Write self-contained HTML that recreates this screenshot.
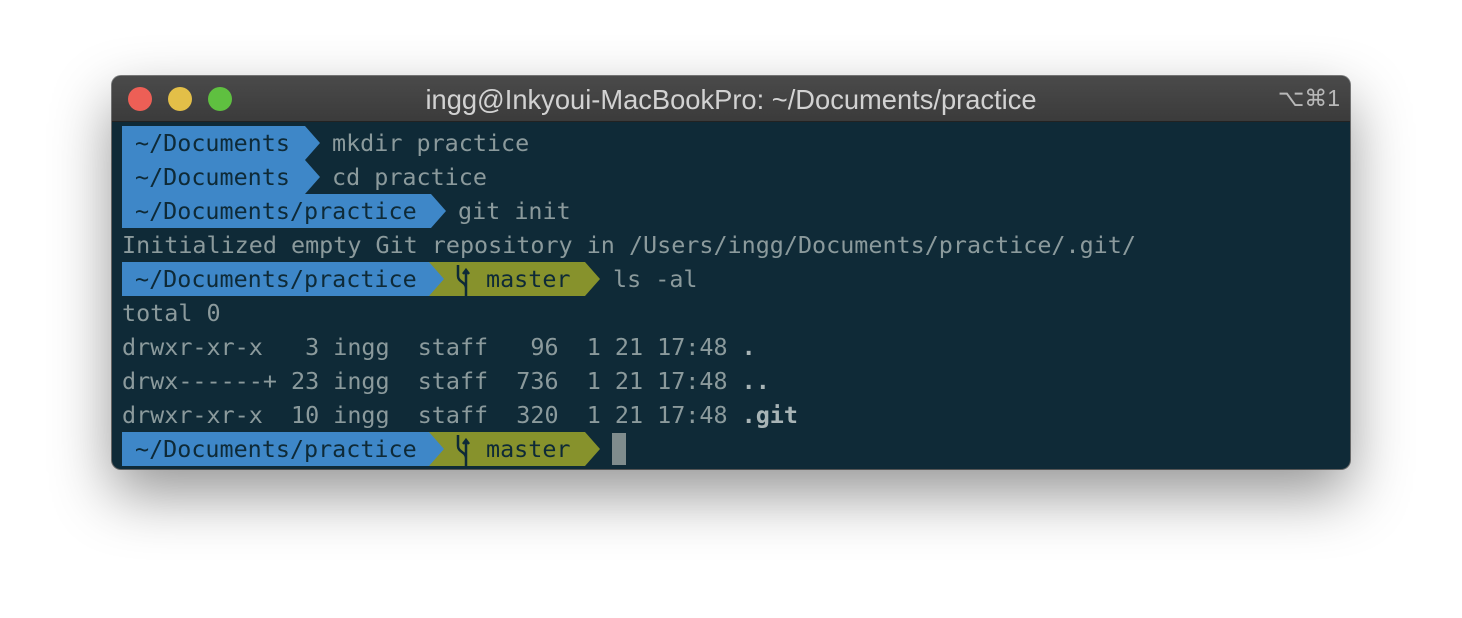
<!DOCTYPE html>
<html><head><meta charset="utf-8"><style>
body{margin:0;width:1462px;height:618px;background:#fff;overflow:hidden;position:relative;font-family:"DejaVu Sans Mono","Liberation Mono",monospace}
.win{position:absolute;left:112px;top:76px;width:1238px;height:393px;border-radius:9px;background:#0f2a37;box-shadow:0 25px 60px rgba(0,0,0,.42),0 0 0 1px rgba(0,0,0,.5);overflow:hidden}
.tb{position:absolute;left:0;top:0;width:100%;height:45px;background:linear-gradient(#4a4a4a,#3b3b3b);border-bottom:1px solid #222}
.dot{position:absolute;top:11px;width:24px;height:24px;border-radius:50%}
.title{position:absolute;left:0;right:0;top:8px;text-align:center;font:27.3px "Liberation Sans",sans-serif;color:#d2d2d2}
.kb{position:absolute;right:10px;top:9px;font:23px "Liberation Sans","DejaVu Sans",sans-serif;color:#b8b8b8}
.r{position:absolute;left:10px;height:34px;line-height:35px;font-size:23.4px;color:#8b9a9c;white-space:pre}
.bl{position:absolute;top:0;height:34px;background:#3e87c8}
.ol{position:absolute;top:0;height:34px;background:#87922c}
.t{position:absolute;top:0;white-space:pre;}
.d{color:#0e2a37}
svg{position:absolute;top:0}
</style></head><body>
<div class="win">
<div class="tb">
<div class="dot" style="left:16px;background:#ed5f56"></div>
<div class="dot" style="left:56px;background:#e3bf48"></div>
<div class="dot" style="left:96px;background:#5fc040"></div>
<div class="title">ingg@Inkyoui-MacBookPro: ~/Documents/practice</div>
<div class="kb">⌥⌘1</div>
</div>

<div class="r" style="top:50px;width:1220px"><div class="bl" style="left:0;width:183px"></div><svg style="left:183px" width="16" height="34"><path d="M0 0L15 17L0 34Z" fill="#3e87c8"/></svg><span class="t d" style="left:13px">~/Documents</span><span class="t" style="left:210px">mkdir practice</span></div>
<div class="r" style="top:84px;width:1220px"><div class="bl" style="left:0;width:183px"></div><svg style="left:183px" width="16" height="34"><path d="M0 0L15 17L0 34Z" fill="#3e87c8"/></svg><span class="t d" style="left:13px">~/Documents</span><span class="t" style="left:210px">cd practice</span></div>
<div class="r" style="top:118px;width:1220px"><div class="bl" style="left:0;width:309px"></div><svg style="left:309px" width="16" height="34"><path d="M0 0L15 17L0 34Z" fill="#3e87c8"/></svg><span class="t d" style="left:13px">~/Documents/practice</span><span class="t" style="left:336px">git init</span></div>
<div class="r" style="top:152px;width:1220px"><span class="t" style="left:0">Initialized empty Git repository in /Users/ingg/Documents/practice/.git/</span></div>
<div class="r" style="top:186px;width:1220px"><div class="bl" style="left:0;width:309px"></div><div class="ol" style="left:307px;width:156px"></div><svg style="left:307px" width="16" height="34"><path d="M0 0L15 17L0 34Z" fill="#3e87c8"/></svg><svg style="left:463px" width="16" height="34"><path d="M0 0L15 17L0 34Z" fill="#87922c"/></svg><svg style="left:333px" width="16" height="34"><path d="M3 3V14M3 14C3 20 11 20 11 26V34M11 26V9M8 12L11 8L14 12" stroke="#0e2a37" stroke-width="2.5" fill="none"/></svg><span class="t d" style="left:13px">~/Documents/practice</span><span class="t d" style="left:364px">master</span><span class="t" style="left:491px">ls -al</span></div>
<div class="r" style="top:220px;width:1220px"><span class="t" style="left:0">total 0</span></div>
<div class="r" style="top:254px;width:1220px"><span class="t" style="left:0">drwxr-xr-x   3 ingg  staff   96  1 21 17:48 <b style="color:#a8b4b6">.</b></span></div>
<div class="r" style="top:288px;width:1220px"><span class="t" style="left:0">drwx------+ 23 ingg  staff  736  1 21 17:48 <b style="color:#a8b4b6">..</b></span></div>
<div class="r" style="top:322px;width:1220px"><span class="t" style="left:0">drwxr-xr-x  10 ingg  staff  320  1 21 17:48 <b style="color:#a8b4b6">.git</b></span></div>
<div class="r" style="top:356px;width:1220px"><div class="bl" style="left:0;width:309px"></div><div class="ol" style="left:307px;width:156px"></div><svg style="left:307px" width="16" height="34"><path d="M0 0L15 17L0 34Z" fill="#3e87c8"/></svg><svg style="left:463px" width="16" height="34"><path d="M0 0L15 17L0 34Z" fill="#87922c"/></svg><svg style="left:333px" width="16" height="34"><path d="M3 3V14M3 14C3 20 11 20 11 26V34M11 26V9M8 12L11 8L14 12" stroke="#0e2a37" stroke-width="2.5" fill="none"/></svg><span class="t d" style="left:13px">~/Documents/practice</span><span class="t d" style="left:364px">master</span><div style="position:absolute;left:490px;top:1px;width:14px;height:32px;background:#7f8c8d"></div></div>
</div>
</body></html>
